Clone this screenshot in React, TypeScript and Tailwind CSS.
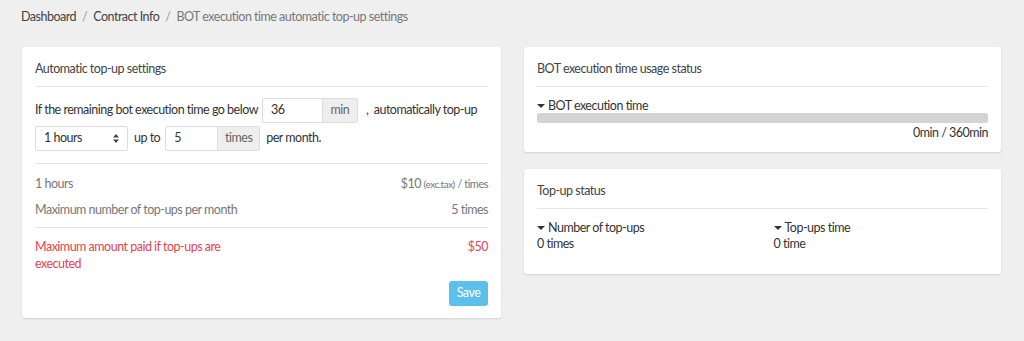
import React from "react";

function Caret() {
  return <span className="inline-block w-0 h-0 border-x-[4px] border-x-transparent border-t-[4px] border-t-[#333] mr-[3px] mb-[2px]" />;
}

function Card({ title, children }: { title: string; children: React.ReactNode }) {
  return (
    <div className="bg-white rounded-[3px] shadow-[0_1px_2px_rgba(0,0,0,0.12)] px-[13px]">
      <div className="h-[40px] pt-[13px] border-b border-[#e5e5e5] text-[#444]">{title}</div>
      {children}
    </div>
  );
}

export default function App() {
  return (
    <div className="min-h-[341px] bg-[#efefef] text-[12.5px] tracking-[-0.5px] text-[#333]" style={{ fontFamily: "Lato, 'Noto Sans', sans-serif" }}>
      <div className="px-[21px] pt-[8px] h-[47px] text-[#444]">
        <span>Dashboard</span>
        <span className="mx-[6px] text-[#999]">/</span>
        <span>Contract Info</span>
        <span className="mx-[6px] text-[#999]">/</span>
        <span className="text-[#777]">BOT execution time automatic top-up settings</span>
      </div>

      <div className="flex gap-[23px] pl-[22px] pr-[23px]">
        {/* Left: settings */}
        <div className="w-[479px]">
          <Card title="Automatic top-up settings">
            <div className="pt-[11px] pb-[12px] border-b border-[#e5e5e5]">
              <div className="flex items-center h-[25px]">
                <span>If the remaining bot execution time go below</span>
                <div className="flex ml-[4px] h-[25px] border border-[#ddd] rounded-[2px]">
                  <div className="w-[59px] pl-[8px] flex items-center">36</div>
                  <div className="w-[35px] bg-[#eee] text-[#666] flex items-center justify-center border-l border-[#ddd]">min</div>
                </div>
                <span className="ml-[8px]">,&nbsp; automatically top-up</span>
              </div>
              <div className="flex items-center h-[25px] mt-[3px]">
                <div className="w-[93px] h-[25px] border border-[#ddd] rounded-[2px] flex items-center justify-between px-[8px]">
                  <span>1 hours</span>
                  <svg width="6" height="9" viewBox="0 0 6 9"><path d="M3 0L6 3.5H0Z M3 9L0 5.5H6Z" fill="#444" /></svg>
                </div>
                <span className="ml-[6px]">up to</span>
                <div className="flex ml-[5px] h-[25px] border border-[#ddd] rounded-[2px]">
                  <div className="w-[51px] pl-[8px] flex items-center">5</div>
                  <div className="w-[42px] bg-[#eee] text-[#666] flex items-center justify-center border-l border-[#ddd]">times</div>
                </div>
                <span className="ml-[6px]">per month.</span>
              </div>
            </div>
            <div className="pt-[11px] pb-[7px] border-b border-[#e5e5e5] text-[#777]">
              <div className="flex justify-between h-[26px]">
                <span>1 hours</span>
                <span>
                  $10 <span className="text-[10px]">(exc.tax)</span> <span className="text-[11px]">/ times</span>
                </span>
              </div>
              <div className="flex justify-between">
                <span>Maximum number of top-ups per month</span>
                <span>5 times</span>
              </div>
            </div>
            <div className="pt-[10px] flex justify-between text-[#e8434e] leading-[17px]">
              <span className="w-[200px]">Maximum amount paid if top-ups are executed</span>
              <span>$50</span>
            </div>
            <div className="flex justify-end pt-[9px] pb-[12px]">
              <button className="w-[39px] h-[25px] bg-[#5bc0eb] text-white rounded-[3px]">Save</button>
            </div>
          </Card>
        </div>

        {/* Right */}
        <div className="w-[477px] flex flex-col gap-[17px]">
          <Card title="BOT execution time usage status">
            <div className="pt-[11px] pb-[11px]">
              <div className="leading-[15px]"><Caret />BOT execution time</div>
              <div className="h-[10px] bg-[#d4d4d4] rounded-[2px]" />
              <div className="text-right mt-[2px] leading-[16px]">0min / 360min</div>
            </div>
          </Card>
          <Card title="Top-up status">
            <div className="grid grid-cols-2 pt-[11px] pb-[22px] leading-[16px]">
              <div>
                <div><Caret />Number of top-ups</div>
                <div>0 times</div>
              </div>
              <div className="pl-[11px]">
                <div><Caret />Top-ups time</div>
                <div>0 time</div>
              </div>
            </div>
          </Card>
        </div>
      </div>
    </div>
  );
}
